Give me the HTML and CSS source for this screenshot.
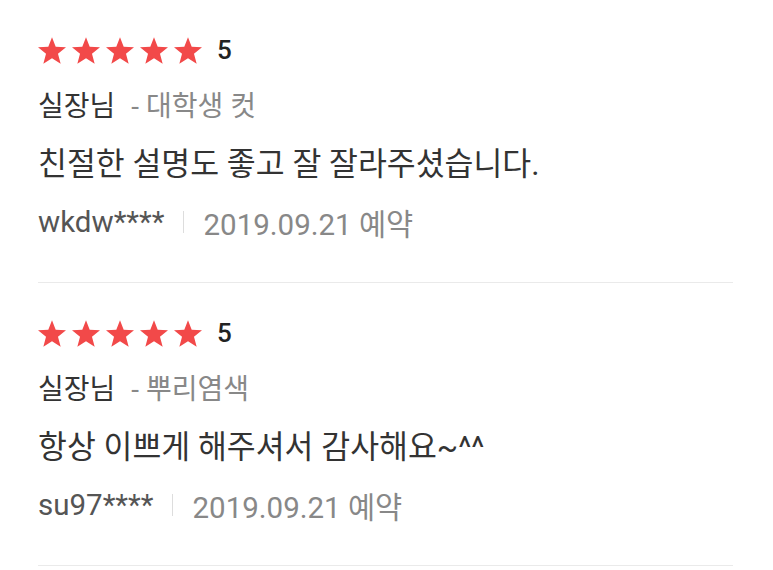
FILE: index.html
```html
<!DOCTYPE html>
<html>
<head>
    <title>Reviews</title>
    <link rel="stylesheet" href="styles.css">
</head>
<body>
    <div class="review-list">
        <div class="review">
            <div class="rating">
                <div class="stars">
                    <svg class="star" viewBox="1 0 22 21"><path d="M12 0l2.9 7.6 8.1.4-6.3 5.1 2.1 7.9L12 16.5 5.2 21l2.1-7.9L1 8l8.1-.4z"/></svg>
                    <svg class="star" viewBox="1 0 22 21"><path d="M12 0l2.9 7.6 8.1.4-6.3 5.1 2.1 7.9L12 16.5 5.2 21l2.1-7.9L1 8l8.1-.4z"/></svg>
                    <svg class="star" viewBox="1 0 22 21"><path d="M12 0l2.9 7.6 8.1.4-6.3 5.1 2.1 7.9L12 16.5 5.2 21l2.1-7.9L1 8l8.1-.4z"/></svg>
                    <svg class="star" viewBox="1 0 22 21"><path d="M12 0l2.9 7.6 8.1.4-6.3 5.1 2.1 7.9L12 16.5 5.2 21l2.1-7.9L1 8l8.1-.4z"/></svg>
                    <svg class="star" viewBox="1 0 22 21"><path d="M12 0l2.9 7.6 8.1.4-6.3 5.1 2.1 7.9L12 16.5 5.2 21l2.1-7.9L1 8l8.1-.4z"/></svg>
                </div>
                <span class="score">5</span>
            </div>
            <div class="service">
                <span class="staff">실장님</span>
                <span class="menu">- 대학생 컷</span>
            </div>
            <p class="comment">친절한 설명도 좋고 잘 잘라주셨습니다.</p>
            <div class="meta">
                <span class="user">wkdw****</span>
                <span class="divider"></span>
                <span class="date">2019.09.21 예약</span>
            </div>
        </div>
        <div class="review">
            <div class="rating">
                <div class="stars">
                    <svg class="star" viewBox="1 0 22 21"><path d="M12 0l2.9 7.6 8.1.4-6.3 5.1 2.1 7.9L12 16.5 5.2 21l2.1-7.9L1 8l8.1-.4z"/></svg>
                    <svg class="star" viewBox="1 0 22 21"><path d="M12 0l2.9 7.6 8.1.4-6.3 5.1 2.1 7.9L12 16.5 5.2 21l2.1-7.9L1 8l8.1-.4z"/></svg>
                    <svg class="star" viewBox="1 0 22 21"><path d="M12 0l2.9 7.6 8.1.4-6.3 5.1 2.1 7.9L12 16.5 5.2 21l2.1-7.9L1 8l8.1-.4z"/></svg>
                    <svg class="star" viewBox="1 0 22 21"><path d="M12 0l2.9 7.6 8.1.4-6.3 5.1 2.1 7.9L12 16.5 5.2 21l2.1-7.9L1 8l8.1-.4z"/></svg>
                    <svg class="star" viewBox="1 0 22 21"><path d="M12 0l2.9 7.6 8.1.4-6.3 5.1 2.1 7.9L12 16.5 5.2 21l2.1-7.9L1 8l8.1-.4z"/></svg>
                </div>
                <span class="score">5</span>
            </div>
            <div class="service">
                <span class="staff">실장님</span>
                <span class="menu">- 뿌리염색</span>
            </div>
            <p class="comment">항상 이쁘게 해주셔서 감사해요~^^</p>
            <div class="meta">
                <span class="user">su97****</span>
                <span class="divider"></span>
                <span class="date">2019.09.21 예약</span>
            </div>
        </div>
    </div>
</body>
</html>
```

FILE: styles.css
```css
body {
    margin: 0;
    background: #fff;
    font-family: Roboto, "Noto Sans CJK KR", sans-serif;
    color: #333;
}
.review-list {
    margin: 0 40px 0 38px;
}
.review {
    padding: 37px 0 40px;
    border-bottom: 1px solid #eaeaea;
}
.rating {
    display: flex;
    align-items: center;
    height: 26px;
}
.stars {
    display: flex;
    gap: 6px;
}
.star {
    width: 28px;
    height: 27px;
    fill: #f24949;
}
.score {
    margin-left: 15px;
    font-size: 26px;
    font-weight: 500;
    color: #222;
    line-height: 26px;
}
.service {
    margin-top: 26px;
    line-height: 36px;
    font-size: 28px;
}
.staff {
    color: #333;
}
.menu {
    margin-left: 9px;
    color: #888;
}
.comment {
    margin: 20px 0 0;
    font-size: 31.4px;
    line-height: 40px;
    color: #333;
}
.meta {
    display: flex;
    align-items: center;
    margin-top: 17px;
    height: 40px;
    font-size: 29.5px;
}
.user {
    color: #555;
}
.divider {
    width: 1px;
    height: 22px;
    margin: 0 19px 0 19px;
    background: #ddd;
}
.date {
    color: #888;
}
```
